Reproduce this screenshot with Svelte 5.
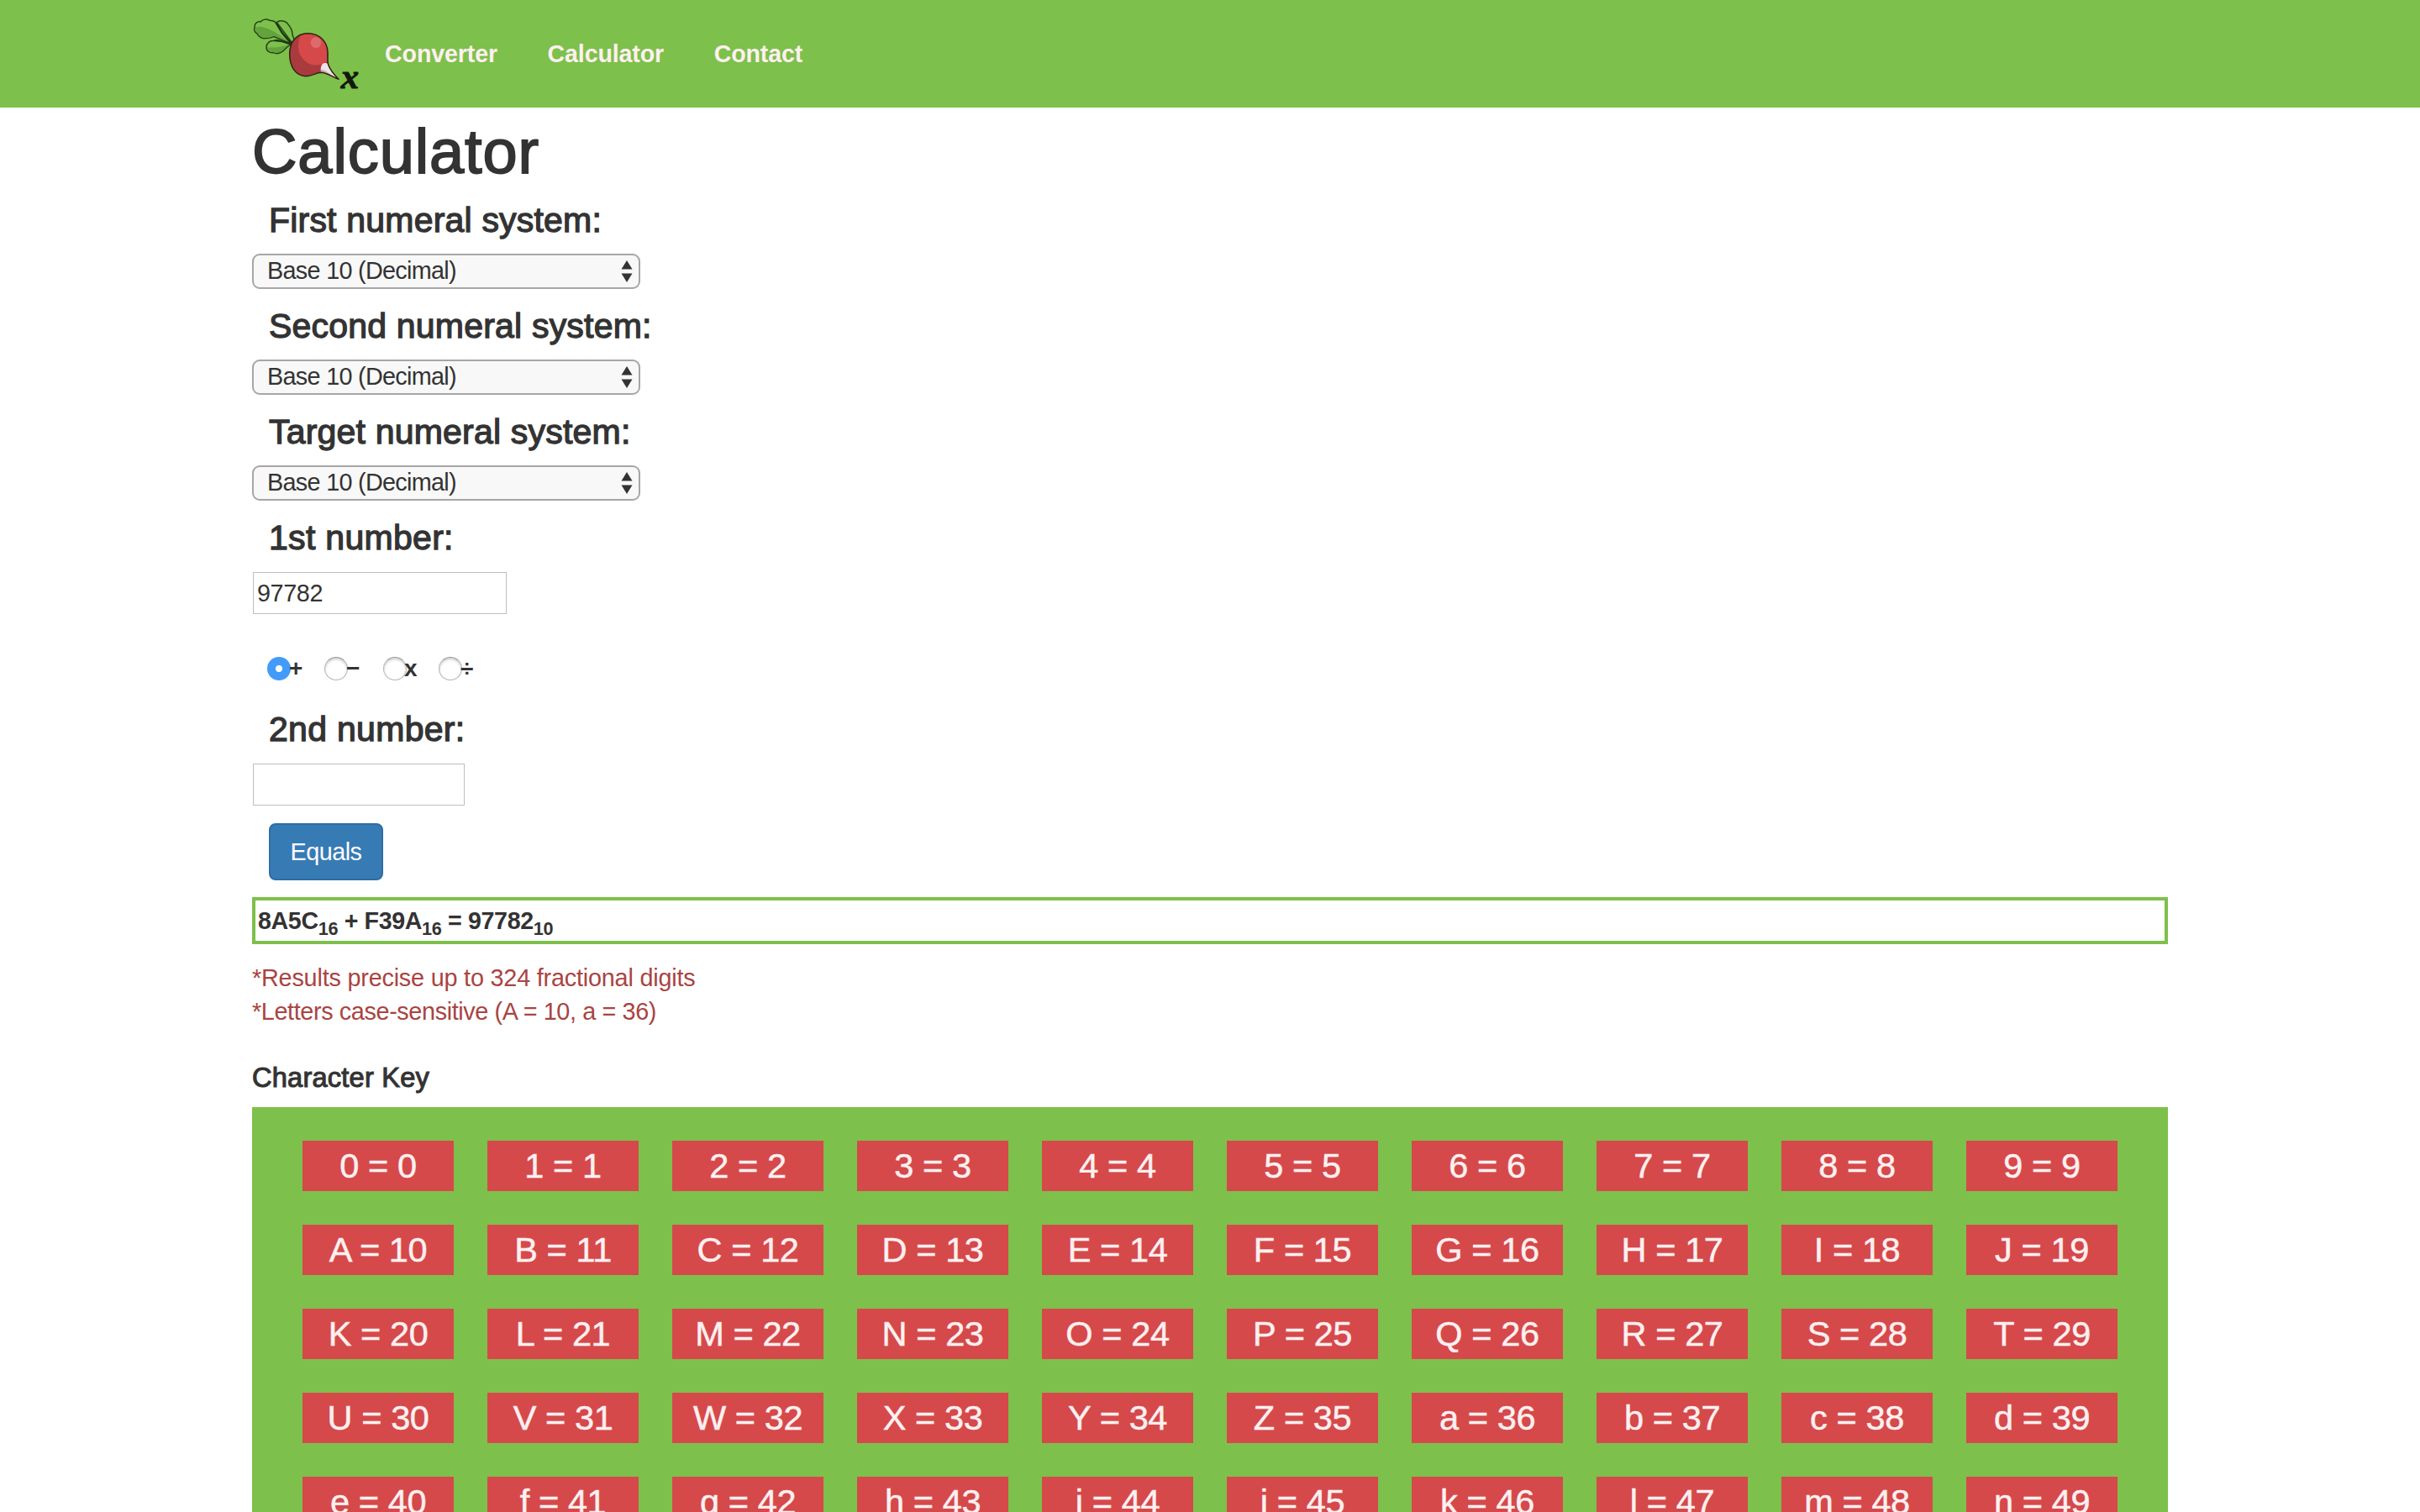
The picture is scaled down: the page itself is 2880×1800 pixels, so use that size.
<script>
  const links = ['Converter', 'Calculator', 'Contact'];
  const systems = ['First', 'Second', 'Target'];
  const ops = [
    { sign: '+', kind: 'plus' },
    { sign: '−', kind: 'minus' },
    { sign: 'x', kind: 'times' },
    { sign: '÷', kind: 'divide' }
  ];
  const digits = '0123456789ABCDEFGHIJKLMNOPQRSTUVWXYZabcdefghijklmn'.split('');
  let selected = $state('+');
</script>

<div class="page">
  <nav class="navbar">
    <svg class="logo" viewBox="0 0 480 384" aria-label="Radix">
      <g stroke="#26441a" stroke-width="4.6" stroke-linejoin="round" stroke-linecap="round">
        <path fill="#7dc04b" d="M118 80 C128 71 150 73 158 86 C168 97 174 108 174 124 L181 143 L172 152 C156 130 137 104 118 80Z" />
        <path fill="#7dc04b" d="M169 158 L133 147 C119 141 112 143 107 146 C94 143 81 155 81 168 C81 183 93 190 106 188 C121 195 137 188 146 177 C154 168 161 163 169 158Z" />
        <path fill="#7dc04b" d="M168 156 L136 118 L113 79 C104 70 93 76 91 72 C79 65 64 72 60 78 C49 75 37 86 39 97 C35 110 43 117 48 120 C53 132 69 141 80 136 C92 140 103 129 111 132 C123 138 142 143 168 156Z" />
      </g>
      <path fill="#63a33d" d="M43 96 C77 91 108 111 158 146 L111 129 C100 128 92 136 80 133 C70 136 56 129 50 118 C43 112 41 104 43 96Z" />
      <path fill="#63a33d" d="M84 169 C109 172 135 166 159 161 C146 168 143 182 128 186 C110 190 87 187 84 169Z" />
      <path fill="none" stroke="#1d3310" stroke-width="5" stroke-linecap="round" d="M116 82 L139 118 L171 155 M111 145 L138 148 L168 159" />
      <path fill="#a93a3d" d="M229 119 C271 119 299 149 300 187 C301 210 298 220 302 231 C309 250 322 266 339 283 C316 275 298 260 277 259 C257 260 245 272 222 272 C186 271 164 239 164 193 C164 149 189 119 229 119Z" />
      <path fill="#d5494b" d="M228 121 C270 121 297 149 298 188 L298 220 C280 235 249 237 228 224 C195 204 187 166 202 128 C209 123 219 121 228 121Z" />
      <circle cx="258" cy="152" r="19" fill="#dd6b6c" />
      <path fill="#eee3e8" d="M280 230 C285 223 297 224 301 229 C306 248 319 265 337 281 C314 274 299 259 276 257 C274 246 275 237 280 230Z" />
      <path fill="#c9aeb8" d="M276 248 C292 250 305 262 337 281 C314 276 298 259 276 257Z" />
      <path fill="none" stroke="#332310" stroke-width="4.6" stroke-linejoin="round" d="M229 119 C271 119 299 149 300 187 C301 210 298 220 302 231 C309 250 322 266 339 283 C316 275 298 260 277 259 C257 260 245 272 222 272 C186 271 164 239 164 193 C164 149 189 119 229 119Z" />
      <text class="logo-x" x="347" y="315">x</text>
    </svg>
    <div class="links">
      {#each links as link}
        <a href="#{link}">{link}</a>
      {/each}
    </div>
  </nav>

  <main>
    <h1>Calculator</h1>

    {#each systems as name}
      <section class="system">
        <h3>{name} numeral system:</h3>
        <div class="select">
          <span>Base 10 (Decimal)</span>
          <svg viewBox="0 0 14 26">
            <path d="M7 0 L13.5 10.5 H0.5Z M7 26 L13.5 15.5 H0.5Z" fill="#333" />
          </svg>
        </div>
      </section>
    {/each}

    <h3 class="num">1st number:</h3>
    <div class="field wide">97782</div>

    <div class="ops">
      {#each ops as op}
        <button type="button" class="op {op.kind}" onclick={() => (selected = op.sign)}>
          <i class="radio" class:on={selected === op.sign}></i><b>{op.sign}</b>
        </button>
      {/each}
    </div>

    <h3 class="num">2nd number:</h3>
    <div class="field"></div>

    <button type="button" class="equals">Equals</button>

    <div class="result">8A5C<sub>16</sub> + F39A<sub>16</sub> = 97782<sub>10</sub></div>

    <div class="notes">
      <p class="precise">*Results precise up to 324 fractional digits</p>
      <p class="letters">*Letters case-sensitive (A = 10, a = 36)</p>
    </div>

    <h4>Character Key</h4>
    <div class="key">
      {#each digits as char, value}
        <div class="cell">{char} = {value}</div>
      {/each}
    </div>
  </main>
</div>

<style>
  :global(body) {
    background: #fff;
  }
  .page {
    height: 1800px;
    overflow: hidden;
    font-family: 'Liberation Sans', Arial, sans-serif;
    font-size: 28.8px;
    color: #333;
  }
  .navbar {
    height: 128px;
    padding-left: 290px;
    background: #7dc04b;
    display: flex;
    align-items: center;
  }
  .logo {
    width: 160px;
    height: 128px;
  }
  .logo-x {
    font: italic bold 128px 'Liberation Serif', serif;
    fill: #12180c;
    stroke: #12180c;
    stroke-width: 3px;
  }
  .links {
    display: flex;
    gap: 59.5px;
    padding-left: 8px;
    font-size: 28.6px;
    letter-spacing: -0.12px;
    font-weight: bold;
    line-height: 40px;
  }
  .links a {
    color: #fff0f0;
    text-decoration: none;
  }
  main {
    width: 2280px;
    margin: 0 auto;
  }
  h1, h3, h4, p {
    margin: 0;
    font-weight: normal;
  }
  h1 {
    margin-top: 13px;
    font-size: 74px;
    line-height: 80px;
    margin-bottom: 19px;
    letter-spacing: 0.9px;
    -webkit-text-stroke: 1.8px #333;
  }
  h3 {
    padding-left: 20px;
    font-size: 41px;
    line-height: 44px;
    white-space: nowrap;
    letter-spacing: 0.2px;
    -webkit-text-stroke: 1.3px #333;
  }
  h3.num {
    letter-spacing: 0.3px;
  }
  .select {
    box-sizing: border-box;
    width: 462px;
    height: 42px;
    margin: 18px 0 22px;
    padding: 0 7px 0 16px;
    border: 2px solid #a6a6a6;
    border-radius: 9px;
    background: #f8f8f8;
    display: flex;
    align-items: center;
    justify-content: space-between;
    line-height: 36px;
    letter-spacing: -0.7px;
  }
  .select span {
    height: 38px;
  }
  .select svg {
    width: 14px;
    height: 26px;
  }
  .field {
    box-sizing: border-box;
    width: 252px;
    height: 50px;
    margin: 19px 0 0 1px;
    padding-left: 4px;
    border: 1px solid #bebebe;
    line-height: 49px;
    letter-spacing: -0.4px;
  }
  .field.wide {
    width: 302px;
  }
  .ops {
    display: flex;
    margin: 51px 0 36px;
    padding-left: 18px;
    height: 28px;
  }
  .op {
    display: flex;
    align-items: center;
    padding: 0;
    border: 0;
    background: none;
    font: inherit;
    color: inherit;
  }
  .plus {
    width: 68px;
  }
  .minus {
    width: 70px;
  }
  .times {
    width: 66px;
  }
  .radio {
    box-sizing: border-box;
    width: 28px;
    height: 28px;
    border-radius: 50%;
    border: 1px solid #b5b5b5;
    border-top-color: #999;
    background: #fff;
    box-shadow: inset 0 2px 3px #ccc;
  }
  .radio.on {
    border: 0;
    background: radial-gradient(circle, #fff 3.7px, #429bf9 4.5px);
    box-shadow: none;
  }
  .op b {
    font-size: 28px;
    line-height: 28px;
    margin-left: -2px;
  }
  .times b {
    margin-left: -3px;
  }
  .equals {
    box-sizing: border-box;
    display: block;
    width: 136px;
    height: 68px;
    margin: 21px 0 20px 20px;
    padding: 0;
    border: 2px solid #2e6da4;
    border-radius: 8px;
    background: #377bb5;
    color: #fff;
    font-family: inherit;
    font-size: 28.8px;
    letter-spacing: -0.5px;
  }
  .result {
    box-sizing: border-box;
    height: 56px;
    padding-left: 3px;
    border: 4px solid #7dc04b;
    font-size: 28.6px;
    font-weight: bold;
    line-height: 48px;
    letter-spacing: -0.35px;
    white-space: nowrap;
  }
  sub {
    position: relative;
    bottom: -7px;
    vertical-align: baseline;
    font-size: 21.6px;
    line-height: 0;
  }
  .notes {
    margin: 20px 0 41px;
    color: #a94442;
    line-height: 40px;
  }
  .precise {
    letter-spacing: -0.2px;
  }
  .letters {
    letter-spacing: -0.38px;
  }
  h4 {
    font-size: 32.6px;
    line-height: 36px;
    margin-bottom: 17px;
    letter-spacing: 0.22px;
    -webkit-text-stroke: 1.1px #333;
  }
  .key {
    display: grid;
    grid-template-columns: repeat(10, 180px);
    gap: 40px;
    padding: 40px 60px;
    background: #7dc04b;
  }
  .cell {
    height: 60px;
    background: #d5494b;
    color: #fff0f0;
    font-size: 41.5px;
    line-height: 60px;
    letter-spacing: -0.4px;
    text-align: center;
    -webkit-text-stroke: 0.5px #fff0f0;
  }
</style>
